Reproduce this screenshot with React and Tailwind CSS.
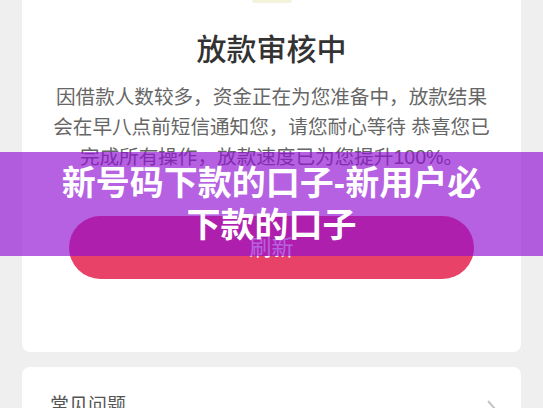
import React from "react";

const FONT = { fontFamily: '"Liberation Sans", "Noto Sans CJK SC", sans-serif' };

export default function App() {
  return (
    <div className="relative min-h-[408px] w-full overflow-hidden bg-[#efefef]" style={FONT}>
      <div className="mx-[22px] flex flex-col items-center rounded-b-[8px] bg-white px-[28px] pb-[73px]">
        {/* bottom edge of the status icon */}
        <div className="h-[3px] w-[40px] rounded-b-full bg-[#f5f2dc]" />
        <h1 className="mt-[27px] text-[30px] font-medium leading-[40px] text-[#333]">放款审核中</h1>
        <p className="mt-[12px] text-center text-[19.6px] leading-[30px] text-[#666]">
          因借款人数较多，资金正在为您准备中，放款结果会在早八点前短信通知您，请您耐心等待 恭喜您已完成所有操作，放款速度已为您提升100%。
        </p>
        <button className="mt-[44px] flex h-[63px] w-[405px] items-center justify-center rounded-full bg-[#e94268] text-[22px] text-white">
          刷新
        </button>
      </div>

      <div className="mx-[22px] mt-[15px] flex items-center justify-between rounded-[8px] bg-white pl-[28px] pr-[22px] pt-[24px] pb-[20px]">
        <span className="text-[19px] leading-[28px] text-[#555]">常见问题</span>
        <svg width="14" height="22" viewBox="0 0 14 22" className="mt-[8px]">
          <path d="M3 2 L11 11 L3 20" fill="none" stroke="#c4c4c4" strokeWidth="2" />
        </svg>
      </div>

      {/* promo overlay banner */}
      <div className="absolute left-0 right-0 top-[152px] flex h-[104px] items-center justify-center bg-[rgba(144,14,211,0.66)] px-[55px]">
        <div className="text-center text-[34px] font-bold leading-[42px] text-white">
          新号码下款的口子-新用户必下款的口子
        </div>
      </div>
    </div>
  );
}
